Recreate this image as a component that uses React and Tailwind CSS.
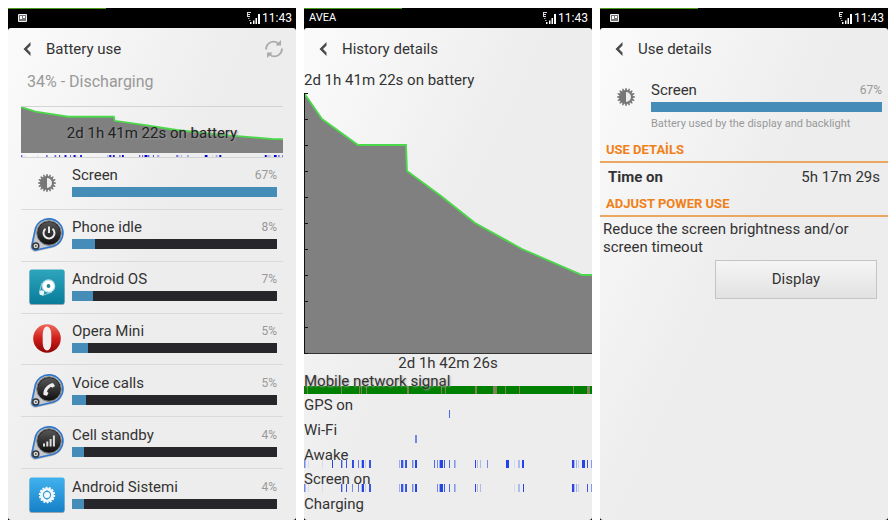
import { useState } from 'react'

// Apps and services, sorted by how much battery they used
const USAGE = [
  { name: 'Screen', percent: 67, bar: 100, icon: 'brightness' },
  { name: 'Phone idle', percent: 8, bar: 11, icon: 'power' },
  { name: 'Android OS', percent: 7, bar: 10, icon: 'android' },
  { name: 'Opera Mini', percent: 5, bar: 8, icon: 'opera' },
  { name: 'Voice calls', percent: 5, bar: 7, icon: 'call' },
  { name: 'Cell standby', percent: 4, bar: 6, icon: 'signal' },
  { name: 'Android Sistemi', percent: 4, bar: 6, icon: 'system' },
]

// [x, width, opacity]
const SCREEN_ON = [
  [0, 1, 0.6], [1, 1, 0.3], [4, 1, 0.1], [18, 1, 0.1], [37, 1, 0.9], [38, 1, 0.3], [42, 1, 0.9],
  [48, 1, 0.6], [54, 1, 0.7], [57, 1, 0.3], [58, 2, 1], [61, 1, 0.2], [65, 2, 0.9], [95, 1, 0.4],
  [97, 2, 0.9], [99, 1, 0.3], [101, 2, 0.9], [108, 1, 0.6], [109, 1, 0.3], [111, 2, 1],
  [133, 1, 0.6], [135, 1, 0.4], [136, 3, 1], [140, 1, 0.9], [145, 1, 0.8], [150, 1, 0.5],
  [151, 1, 0.3], [171, 1, 1], [173, 1, 0.3], [176, 1, 0.3], [210, 1, 0.1], [214, 2, 0.3],
  [219, 1, 1], [268, 2, 1], [270, 1, 0.3], [272, 1, 0.4], [274, 1, 0.2], [283, 1, 0.9], [287, 1, 0.5],
]
const AWAKE = [...SCREEN_ON, [28, 1, 1], [48, 2, 0.9], [130, 1, 0.8], [183, 1, 0.6], [202, 3, 1], [218, 2, 1], [278, 3, 1]]

const TIMELINES = [
  { name: 'GPS on', marks: [[145, 1, 0.8]] },
  { name: 'Wi-Fi', marks: [[111, 2, 0.6]] },
  { name: 'Awake', marks: AWAKE },
  { name: 'Screen on', marks: SCREEN_ON },
  { name: 'Charging', marks: [] },
]

const SIGNAL_GAPS = [[3, 1], [37, 1], [55, 1], [57, 1], [62, 1], [103, 2], [137, 1], [141, 1], [171, 2], [189, 4], [201, 1], [215, 1], [269, 1], [283, 3]]

const LEVELS = '0,0 18,26 54,52 102,52 103,78 137,103 171,130 218,156 278,182 288,182'
const SHORT_LEVELS = '0,0 16,26 52,55 102,55 103,78 137,103 171,130 218,156 278,182 288,182'

function BrightnessIcon() {
  const teeth = Array.from({ length: 16 }, (_, i) => i * 22.5)
  return (
    <svg viewBox="0 0 18 18" className="size-[18px]" aria-hidden="true">
      {teeth.map((deg) => (
        <path key={deg} d="M7.7 3 8.500 0h1L10.300 3z" fill="#777" transform={`rotate(${deg} 9 9)`} />
      ))}
      <circle cx="9" cy="9" r="5.900" fill="#eee" stroke="#777" strokeWidth="1.800" />
      <path d="M9 3a6 6 0 0 0 0 12z" fill="#777" />
    </svg>
  )
}

// Round dark badge with the blue belt used for the system services
function BeltIcon({ children }) {
  return (
    <svg viewBox="0 0 36 36" className="size-9" aria-hidden="true">
      <defs>
        <linearGradient id="badge" x1="0" y1="0" x2="0" y2="1">
          <stop offset="0" stopColor="#555" />
          <stop offset="1" stopColor="#111" />
        </linearGradient>
      </defs>
      <path d="M2 28 5.500 12A15 15 0 1 1 23 31L7.500 34.500A4.600 4.600 0 0 1 2 28z" fill="#888" opacity=".45" />
      <path d="M3 28 6.300 12.500A14 14 0 1 1 23 29.500L7.500 33A3.900 3.900 0 0 1 3 28z" fill="#c3c8cf" stroke="#2f76cc" strokeWidth="1.600" />
      <circle cx="20" cy="16" r="12.300" fill="#222" stroke="#888" strokeWidth="1" />
      <circle cx="20" cy="16" r="11" fill="url(#badge)" />
      <circle cx="6.800" cy="29" r="3" fill="#ddd" stroke="#333" strokeWidth="1.400" />
      <circle cx="6.800" cy="29" r="1" fill="#555" />
      {children}
    </svg>
  )
}

function TileIcon({ from, to, children }) {
  return (
    <svg viewBox="0 0 36 36" className="size-9" aria-hidden="true">
      <defs>
        <linearGradient id={`tile-${from}`} x1="0" y1="0" x2="0" y2="1">
          <stop offset="0" stopColor={`#${from}`} />
          <stop offset="1" stopColor={`#${to}`} />
        </linearGradient>
      </defs>
      <rect x="0.500" y="1" width="35" height="35" rx="2" fill="#9aa5aa" />
      <rect x="0.500" y="0.500" width="35" height="34.500" rx="2" fill={`url(#tile-${from})`} />
      {children}
    </svg>
  )
}

function AppIcon({ name }) {
  if (name === 'brightness') return <BrightnessIcon />
  if (name === 'power') {
    return (
      <BeltIcon>
        <path d="M16.500 11.800a5.500 5.500 0 1 0 7 0M20 9.500v6.500" fill="none" stroke="#e8e8e8" strokeWidth="2" />
      </BeltIcon>
    )
  }
  if (name === 'call') {
    return (
      <BeltIcon>
        <path d="M14.500 22c-.8-6 4-11 9.500-12l2 3-2.500 1.800-1.500-1c-2 1-3.500 3-4 5l1.500 1.200-1.500 2.800z" fill="#eee" />
      </BeltIcon>
    )
  }
  if (name === 'signal') {
    return (
      <BeltIcon>
        <path d="M14 21.500v-3h2v3zM17.300 21.500v-5h2v5zM20.600 21.500V14h2v7.500zM23.900 21.500V10.500h2v11z" fill="#ddd" />
      </BeltIcon>
    )
  }
  if (name === 'android') {
    return (
      <TileIcon from="2fa5bd" to="087c9a">
        <path d="M10.500 22.500 13 14l10 9-9.500 3.500z" fill="none" stroke="#b5e0e8" strokeWidth=".8" />
        <circle cx="19.500" cy="17" r="6.800" fill="#b9e0e7" />
        <circle cx="19.500" cy="17" r="5.600" fill="#fff" />
        <circle cx="19.500" cy="17" r="1.900" fill="#23849a" />
        <circle cx="12.800" cy="23.700" r="2.500" fill="#e6f5f7" />
      </TileIcon>
    )
  }
  if (name === 'system') {
    return (
      <TileIcon from="42b2ee" to="1680c8">
        <circle cx="18" cy="18" r="7.300" fill="none" stroke="#fff" strokeWidth="1.800" strokeDasharray="2 1.270" />
        <circle cx="18" cy="18" r="7" fill="#f2fafe" />
        <circle cx="18" cy="18" r="3.600" fill="none" stroke="#3d9bd6" strokeWidth="1.200" />
        <path d="M18 13.200v1.600M18 21.200v1.600" stroke="#3d9bd6" strokeWidth="1.200" />
      </TileIcon>
    )
  }
  return (
    <svg viewBox="0 0 36 36" className="size-9" aria-hidden="true">
      <defs>
        <linearGradient id="opera" x1="0" y1="0" x2="0" y2="1">
          <stop offset="0" stopColor="#ee6a5c" />
          <stop offset="0.500" stopColor="#cf1f1b" />
          <stop offset="1" stopColor="#8f0503" />
        </linearGradient>
      </defs>
      <ellipse cx="18" cy="17.500" rx="13.800" ry="14.200" fill="url(#opera)" />
      <rect x="13.700" y="5.500" width="8.600" height="24" rx="4.300" ry="8" fill="#f3efee" />
    </svg>
  )
}

function StatusBar({ carrier }) {
  return (
    <div className="relative flex h-5 items-center justify-between bg-black pr-1 pl-[5px] text-white">
      <div className="absolute top-0 left-0 h-px w-[34%] bg-[#4b9a1e]"></div>
      {carrier ? (
        <span className="text-[11px] leading-5">{carrier}</span>
      ) : (
        <svg viewBox="0 0 9 8" className="ml-[5px] h-2 w-[9px]" aria-hidden="true">
          <path d="M.5.500h8v7h-8z" fill="#777" stroke="#eee" />
          <path d="M2 2h2v3H2zM5 2h2v2H5z" fill="#fff" />
        </svg>
      )}
      <div className="flex items-center gap-px">
        <svg viewBox="0 0 15 13" className="h-[13px] w-[15px]" aria-hidden="true">
          <path d="M1 .500h4M1 2.500h3M1 4.500h3M1.500 0v5" stroke="#ddd" fill="none" />
          <path d="M2 6.500h1.500M3 8.500h1.500" stroke="#aaa" fill="none" />
          <path d="M4 10h1.500v2H4zM7 8.500h1.500V12H7zM9.500 6H11v6H9.500zM12 2h2v10h-2z" fill="#fff" />
        </svg>
        <span className="text-[12px] leading-5">11:43</span>
      </div>
    </div>
  )
}

function Phone({ title, carrier, action, children }) {
  return (
    <section className="flex min-w-0 flex-col bg-black">
      <StatusBar carrier={carrier} />
      <div className="flex flex-1 flex-col rounded-[3px] bg-[#ededed] bg-[linear-gradient(115deg,#fbfbfb_0,#ededed_220px)]">
        <header className="flex h-10 items-center pt-px pr-3 pl-[14px]">
          <button type="button" aria-label="Back" className="w-6 text-left">
            <svg viewBox="0 0 10 14" className="h-[14px] w-[10px]" aria-hidden="true">
              <path d="M8.500 0v3.500L5 7l3.500 3.500V14L1.500 7z" fill="#4a4a4a" />
            </svg>
          </button>
          <h1 className="flex-1 text-[15px] leading-5">{title}</h1>
          {action}
        </header>
        {children}
      </div>
    </section>
  )
}

function UsageBar({ name, value }) {
  return (
    <div role="progressbar" aria-label={name} aria-valuenow={value} className="h-[10px] bg-[#26262b]">
      <div className="h-full bg-[#458cb8]" style={{ width: `${value}%` }}></div>
    </div>
  )
}

function UsageRow({ item }) {
  return (
    <li className="flex flex-1 items-center border-b border-[#dadada] pr-[6px] last:border-b-0">
      <div className="flex w-[51px] justify-center">
        <AppIcon name={item.icon} />
      </div>
      <div className="flex-1 pb-1">
        <div className="flex items-center justify-between">
          <span className="text-[15px] leading-5">{item.name}</span>
          <span className="text-[12px] leading-5 text-[#999]">{item.percent}%</span>
        </div>
        <div className="pt-0.5">
          <UsageBar name={item.name} value={item.bar} />
        </div>
      </div>
    </li>
  )
}

function LevelChart({ levels, className }) {
  return (
    <svg viewBox="0 0 288 260" preserveAspectRatio="none" className={className} aria-hidden="true">
      <polygon points={`${levels} 288,260 0,260`} fill="#808080" />
      <polyline points={levels} fill="none" stroke="#4bd84b" strokeWidth="1.800" vectorEffect="non-scaling-stroke" />
    </svg>
  )
}

function Marks({ marks, className }) {
  return (
    <svg viewBox="0 0 288 8" preserveAspectRatio="none" className={className} aria-hidden="true">
      {marks.map(([x, width, opacity], i) => (
        <rect key={i} x={x} y="0" width={width} height="8" opacity={opacity} />
      ))}
    </svg>
  )
}

function BatteryUse() {
  const [refreshes, setRefreshes] = useState(0)

  const refresh = (
    <button type="button" aria-label="Refresh" onClick={() => setRefreshes(refreshes + 1)}>
      <svg viewBox="0 0 20 20" className="size-5" fill="none" stroke="#aaa" strokeWidth="1.800" aria-hidden="true">
        <path d="M2 10.500C2 5 7 1.500 12 3l3.500 2.500M18 9.500C18 15 13 18.500 8 17l-3.500-2.500" />
        <path d="M17 1v5.500h-5.500zM3 19v-5.500h5.500z" fill="#aaa" stroke="none" />
      </svg>
    </button>
  )

  return (
    <Phone title="Battery use" action={refresh}>
      <p className="px-[19px] pt-1 text-[16px] leading-5 text-[#999]">34% - Discharging</p>
      <div className="mx-[13px] mt-[14px] border-y border-[#d4d4d4]">
        <div className="relative">
          <LevelChart levels={SHORT_LEVELS} className="block h-[46px] w-full" />
          <p className="absolute inset-x-0 top-4 text-center text-[15px] leading-5 text-[#222] [text-shadow:1px_1px_2px_#999]">
            2d 1h 41m 22s on battery
          </p>
        </div>
        <Marks marks={AWAKE} className="mt-0.5 block h-0.5 w-full fill-[#0000cc]" />
      </div>
      <ul className="mx-[13px] flex flex-1 flex-col">
        {USAGE.map((item) => (
          <UsageRow key={item.name} item={item} />
        ))}
      </ul>
    </Phone>
  )
}

function HistoryDetails() {
  return (
    <Phone title="History details" carrier="AVEA">
      <p className="pt-0.5 text-[15px] leading-5">2d 1h 41m 22s on battery</p>
      <div className="relative mt-[3px] border-b border-[#333]">
        <LevelChart levels={LEVELS} className="block h-[260px] w-full" />
        <div className="absolute top-0 left-0 flex h-[261px] w-1 flex-col justify-between border-l border-[#111]">
          {Array.from({ length: 11 }, (_, i) => (
            <div key={i} className="h-px bg-[#111]"></div>
          ))}
        </div>
      </div>
      <p className="text-center text-[15px] leading-[18px]">2d 1h 42m 26s</p>
      <div className="relative h-6">
        <svg viewBox="0 0 288 8" preserveAspectRatio="none" className="absolute top-[14px] left-0 h-2 w-full" aria-hidden="true">
          <rect width="288" height="8" fill="#008000" />
          {SIGNAL_GAPS.map(([x, width]) => (
            <rect key={x} x={x} y="0" width={width} height="8" fill="#7d8258" />
          ))}
        </svg>
        <p className="relative text-[15px] leading-[18px] [text-shadow:1px_1px_2px_#aaa]">Mobile network signal</p>
      </div>
      <div className="flex flex-1 flex-col">
        {TIMELINES.map((row) => (
          <div key={row.name} className="relative flex-1">
            <Marks marks={row.marks} className="absolute top-[14px] left-0 h-2 w-full fill-[#2244e8]" />
            <p className="relative text-[15px] leading-[18px]">{row.name}</p>
          </div>
        ))}
      </div>
    </Phone>
  )
}

function SectionTitle({ children }) {
  return (
    <h2 className="border-b-2 border-[#eba660] px-[6px] pb-px text-[13px] leading-5 font-bold text-[#f08018]">
      {children}
    </h2>
  )
}

function UseDetails() {
  return (
    <Phone title="Use details">
      <div className="flex items-start pt-3 pr-[6px] pb-[6px]">
        <div className="flex w-[51px] justify-center pt-2">
          <BrightnessIcon />
        </div>
        <div className="flex-1">
          <div className="flex items-center justify-between">
            <span className="text-[15px] leading-5">Screen</span>
            <span className="text-[12px] leading-5 text-[#999]">67%</span>
          </div>
          <div className="pt-0.5">
            <UsageBar name="Screen" value={100} />
          </div>
          <p className="pt-0.5 text-[11px] leading-5 text-[#999]">Battery used by the display and backlight</p>
        </div>
      </div>
      <SectionTitle>USE DETAİLS</SectionTitle>
      <div className="flex items-center justify-between px-2 pt-1 pb-[7px] text-[15px] leading-5">
        <span className="font-bold">Time on</span>
        <span>5h 17m 29s</span>
      </div>
      <SectionTitle>ADJUST POWER USE</SectionTitle>
      <p className="px-[3px] pt-[3px] text-[15px] leading-[18px]">Reduce the screen brightness and/or screen timeout</p>
      <button
        type="button"
        className="mt-1 mr-[11px] h-[39px] w-[162px] self-end border border-[#c4c4c4] bg-linear-to-b from-[#f5f5f5] to-[#e2e2e2] text-[15px]"
      >
        Display
      </button>
    </Phone>
  )
}

export default function App() {
  return (
    <main className="grid min-h-screen grid-cols-3 gap-2 bg-white p-2 font-[Roboto,sans-serif] text-[#333]">
      <BatteryUse />
      <HistoryDetails />
      <UseDetails />
    </main>
  )
}
